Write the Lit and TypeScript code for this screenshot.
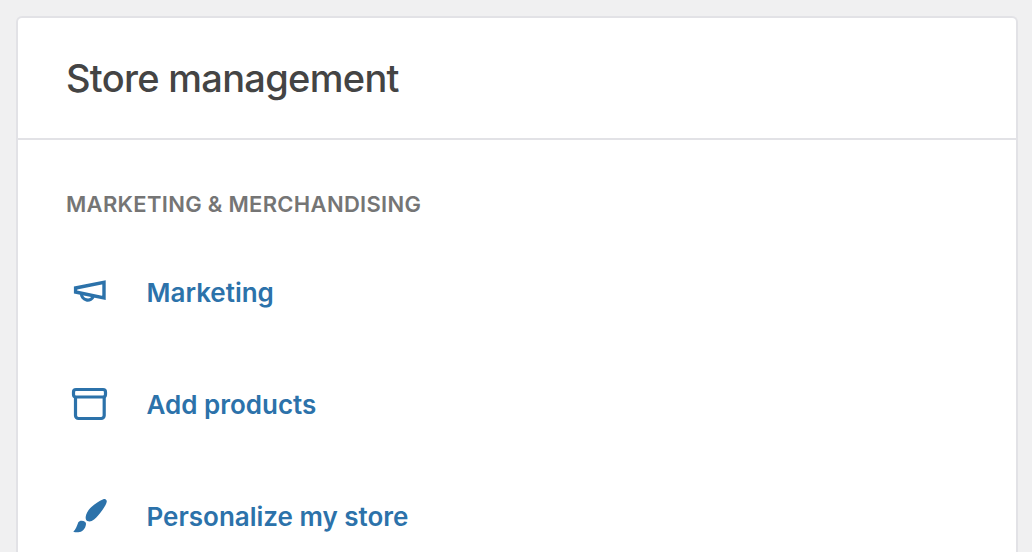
import { LitElement, html, css, svg } from "lit";
import { customElement } from "lit/decorators.js";

const icons = [
  svg`<path d="M7.6 15 V19 L36 25 V9.4 Z" fill="none" stroke="currentColor" stroke-width="3.4"/><path d="M13.5 20.5 A6.2 6.2 0 0 0 25.5 23" fill="none" stroke="currentColor" stroke-width="3.2"/>`,
  svg`<path d="M7.5 12 V30.5 a3 3 0 0 0 3 3 H33.2 a3 3 0 0 0 3 -3 V12" fill="none" stroke="currentColor" stroke-width="3.2"/><rect x="5.5" y="4.5" width="32" height="7.5" rx="2.5" fill="none" stroke="currentColor" stroke-width="3.2"/>`,
  svg`<path d="M38.7 3.7 C38 2 36.5 1.8 35.3 2.3 C31 4 26.5 7.2 23.7 9.7 C20.5 12.5 18.2 16.5 17.7 19.7 C17.5 22 18 23.4 19.3 24 C20.8 24.7 22.4 24.6 23.7 24 C27 22.4 30 18.8 32 16.3 C35 12.5 39.5 6 38.7 3.7 Z" fill="currentColor"/><path d="M5.3 34.7 C7.5 33 9 29 10.3 25.3 C11 24.2 12.3 23.6 13.7 23.7 C16.3 23.8 18.3 25 18 27 C17.8 29.5 16.8 31.6 15.3 33 C13.8 34.4 12 35.2 10.3 35.3 C8.5 35.4 6.5 35.2 5.3 34.7 Z" fill="currentColor"/>`,
];

@customElement("app-root")
export class AppRoot extends LitElement {
  static styles = css`
    :host { display: block; height: 552px; overflow: hidden; background: #f0f0f1; font-family: Inter, "Liberation Sans", sans-serif; }
    .page { padding: 16px 14px 0 16px; }
    .card { background: #fff; border: 2px solid #e2e2e6; border-bottom: 0; border-radius: 6px 6px 0 0; height: 536px; box-sizing: border-box; }
    .head { box-sizing: border-box; padding: 0 48px; display: flex; align-items: center; border-bottom: 2px solid #e2e2e6; height: 122px; }
    h2 { margin: 0; font-size: 38px; font-weight: 450; color: #444; letter-spacing: -0.7px; }
    .body { padding: 50px 48px 0; }
    .label { font-size: 22px; line-height: 28px; font-weight: 600; color: #757575; letter-spacing: 0.3px; text-transform: uppercase; }
    .rows { display: flex; flex-direction: column; gap: 72px; margin-top: 55px; }
    .row { display: flex; align-items: center; height: 40px; color: #2c72aa; }
    .row svg { width: 40px; height: 40px; margin-right: 38.5px; margin-left: 2px; flex: none; }
    .row span { font-size: 26px; font-weight: 600; margin-top: -1px; }
  `;
  render() {
    const items = ["Marketing", "Add products", "Personalize my store"];
    return html`<div class="page"><div class="card">
      <div class="head"><h2>Store management</h2></div>
      <div class="body">
        <div class="label">Marketing &amp; Merchandising</div>
        <div class="rows">
          ${items.map((t, i) => html`<div class="row"><svg viewBox="0 0 40 40">${icons[i]}</svg><span>${t}</span></div>`)}
        </div>
      </div>
    </div></div>`;
  }
}
